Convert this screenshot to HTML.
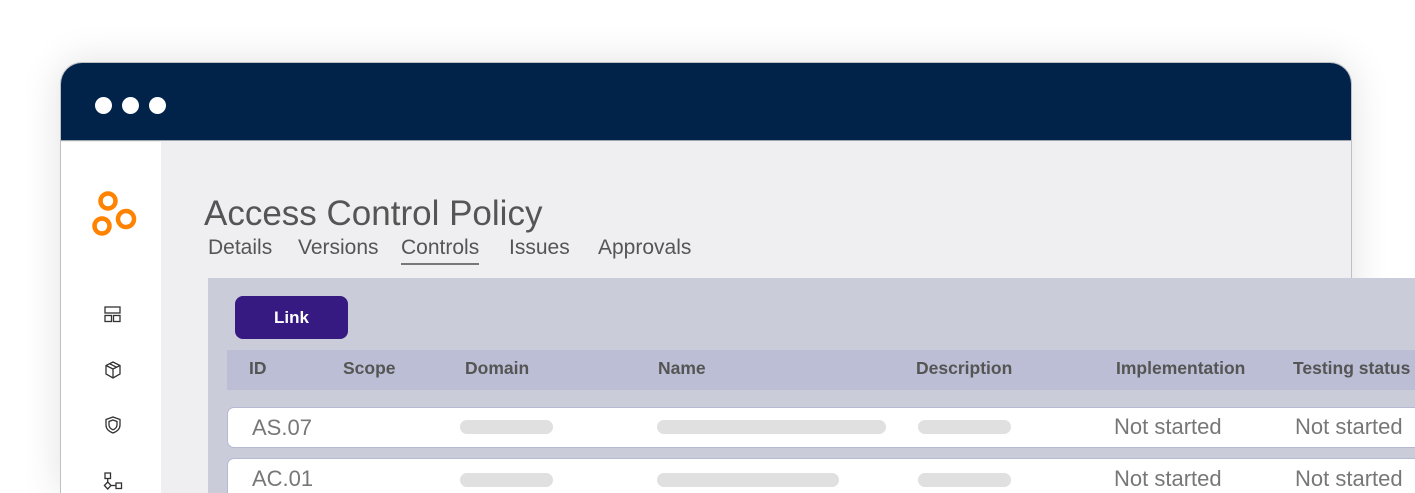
<!DOCTYPE html>
<html><head><style>
*{margin:0;padding:0;box-sizing:border-box}
html,body{width:1415px;height:493px;overflow:hidden}
body{background:#fff;position:relative;font-family:"Liberation Sans",sans-serif}
.clip{position:absolute;left:0;top:0;width:1415px;height:493px;overflow:hidden}
.win{position:absolute;left:60px;top:62px;width:1292px;height:431px;border-radius:22px 22px 0 0;background:#efeff1;border:1.5px solid #bfc0c4;border-bottom:none;box-shadow:0 0 40px rgba(0,0,0,0.12);overflow:hidden}
.top{position:absolute;left:0;top:0;right:0;height:78px;background:#012249;border-bottom:1.5px solid #a0a4ac}
.dot{position:absolute;top:34px;width:17px;height:17px;border-radius:50%;background:#fff}
.side{position:absolute;left:0;top:79px;width:100px;height:400px;background:#fff}
.t{position:absolute;color:#555;white-space:nowrap}
.panel{position:absolute;left:208px;top:278px;width:1220px;height:215px;background:#cbccd9}
.hdr{position:absolute;left:227px;top:350px;width:1200px;height:40px;background:#bbbed4}
.row{position:absolute;left:227px;width:1200px;height:41px;background:#fff;border:1.5px solid #b6b9d2;border-radius:7px}
.bar{position:absolute;height:14px;border-radius:7px;background:#e0e0e0}
.h{position:absolute;top:358px;font-size:17.5px;font-weight:bold;color:#555}
.c{position:absolute;font-size:22px;color:#777}
</style></head><body><div class="clip">
<div class="win">
<div class="top"><div class="dot" style="left:34px"></div><div class="dot" style="left:61px"></div><div class="dot" style="left:88px"></div></div>
<div class="side"></div>
</div>
<svg style="position:absolute;left:90px;top:190px" width="50" height="50"><g fill="none" stroke="#ff8200" stroke-width="4.5"><circle cx="18" cy="11" r="7.5"/><circle cx="12" cy="36" r="7.5"/><circle cx="36" cy="29" r="8"/></g></svg>
<svg style="position:absolute;left:103px;top:305px" width="20" height="20" fill="none" stroke="#333" stroke-width="1.3"><rect x="2" y="2" width="15" height="6"/><rect x="2" y="10.5" width="6.5" height="6"/><rect x="10.5" y="10.5" width="6.5" height="6"/></svg>
<svg style="position:absolute;left:103px;top:360px" width="20" height="20" fill="none" stroke="#333" stroke-width="1.3"><path d="M10 2L17 5.5V14L10 18L3 14V5.5Z M3 5.5L10 9L17 5.5 M10 9V18 M6.5 3.7L13.5 7.2"/></svg>
<svg style="position:absolute;left:103px;top:415px" width="20" height="22" fill="none" stroke="#333" stroke-width="1.3"><path d="M10 2L17 4.5V10C17 14 14 16.5 10 18C6 16.5 3 14 3 10V4.5Z"/><path d="M10 5L14 6.5V10C14 12.3 12.2 13.8 10 14.8C7.8 13.8 6 12.3 6 10V6.5Z"/></svg>
<svg style="position:absolute;left:103px;top:472px" width="22" height="21" fill="none" stroke="#333" stroke-width="1.3"><rect x="2" y="1" width="5.5" height="5.5"/><path d="M4.7 6.5V10"/><path d="M4.7 10L8 13.5L4.7 17L1.4 13.5Z"/><path d="M8 13.5H13"/><rect x="13" y="11" width="5.5" height="5.5"/></svg>
<div class="t" style="left:204px;top:194px;font-size:35px">Access Control Policy</div>
<div class="t" style="left:208px;top:236px;font-size:21px">Details</div>
<div class="t" style="left:298px;top:236px;font-size:21px">Versions</div>
<div class="t" style="left:401px;top:236px;font-size:21px">Controls</div>
<div style="position:absolute;left:401px;top:263px;width:78px;height:2px;background:#777"></div>
<div class="t" style="left:509px;top:236px;font-size:21px">Issues</div>
<div class="t" style="left:598px;top:236px;font-size:21px">Approvals</div>
<div class="panel"></div>
<div style="position:absolute;left:235px;top:296px;width:113px;height:43px;background:#361981;border-radius:8px;color:#fff;font-weight:bold;font-size:17px;text-align:center;line-height:43px">Link</div>
<div class="hdr"></div>
<div class="h" style="left:249px">ID</div>
<div class="h" style="left:343px">Scope</div>
<div class="h" style="left:465px">Domain</div>
<div class="h" style="left:658px">Name</div>
<div class="h" style="left:916px">Description</div>
<div class="h" style="left:1116px">Implementation</div>
<div class="h" style="left:1293px">Testing status</div>
<div class="row" style="top:407px"></div>
<div class="row" style="top:458px"></div>
<div class="c" style="left:252px;top:415px">AS.07</div>
<div class="c" style="left:252px;top:466px">AC.01</div>
<div class="bar" style="left:460px;top:420px;width:93px"></div>
<div class="bar" style="left:657px;top:420px;width:229px"></div>
<div class="bar" style="left:918px;top:420px;width:93px"></div>
<div class="bar" style="left:460px;top:473px;width:93px"></div>
<div class="bar" style="left:657px;top:473px;width:182px"></div>
<div class="bar" style="left:918px;top:473px;width:93px"></div>
<div class="c" style="left:1114px;top:414px">Not started</div>
<div class="c" style="left:1295px;top:414px">Not started</div>
<div class="c" style="left:1114px;top:466px">Not started</div>
<div class="c" style="left:1295px;top:466px">Not started</div>
</div></body></html>
